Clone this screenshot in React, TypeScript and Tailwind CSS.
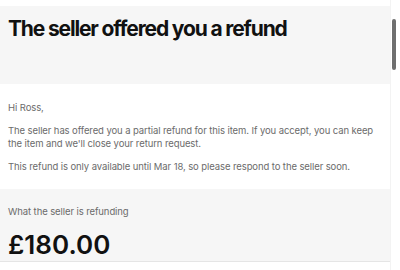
import React from "react";

const App: React.FC = () => {
  return (
    <div
      className="w-[400px] h-[270px] overflow-hidden bg-white flex"
      style={{ fontFamily: "Inter, 'Noto Sans', sans-serif" }}
    >
      <div className="w-[390px] shrink-0 pt-[6px]">
        {/* header */}
        <div className="h-[78px] bg-[#f6f6f6] px-[8px] pt-[8px]">
          <h1 className="text-[21px] leading-[30px] font-bold text-[#111] tracking-[-0.055em]">
            The seller offered you a refund
          </h1>
        </div>

        {/* message */}
        <div className="px-[8px] pt-[17px] pb-[16px] text-[9.5px] leading-[13px] tracking-[-0.01em] text-[#6b6b6b] space-y-[10px]">
          <p>Hi Ross,</p>
          <p>
            The seller has offered you a partial refund for this item. If you
            accept, you can keep the item and we'll close your return request.
          </p>
          <p>
            This refund is only available until Mar 18, so please respond to
            the seller soon.
          </p>
        </div>

        {/* refund amount */}
        <div className="bg-[#f6f6f6] px-[8px] pt-[16px] h-[72px]">
          <p className="text-[9.5px] leading-[13px] tracking-[-0.01em] text-[#6b6b6b]">
            What the seller is refunding
          </p>
          <p className="mt-[12px] text-[26px] leading-[30px] font-semibold text-[#111]">
            £180.00
          </p>
        </div>
        <div className="h-px bg-[#e5e5e5]" />
      </div>

      {/* scrollbar */}
      <div className="flex-1 border-l border-[#f3f3f3]">
        <div className="ml-[1px] mt-[19px] w-[4px] h-[51px] rounded-full bg-[#6e6e6e]" />
      </div>
    </div>
  );
};

export default App;
